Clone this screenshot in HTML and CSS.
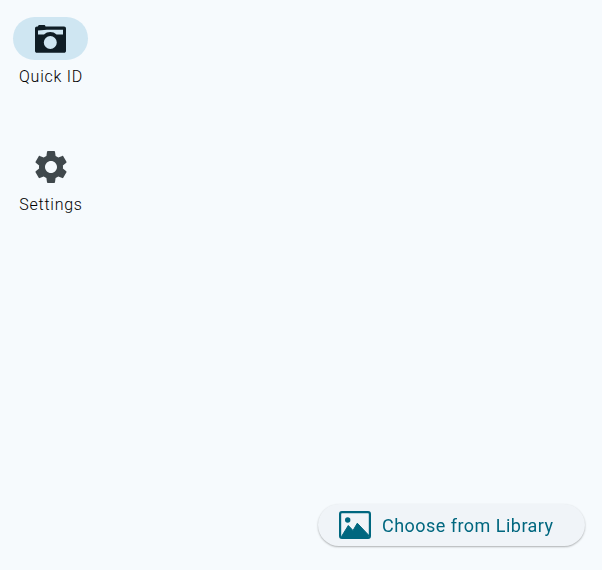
FILE: index.html
```html
<!DOCTYPE html>
<html lang="en">
  <head>
    <meta charset="UTF-8" />
    <meta name="viewport" content="width=device-width, initial-scale=1.0" />
    <title>Quick ID</title>
    <link rel="stylesheet" href="styles.css">
  </head>
  <body>
    <nav class="rail">
      <div class="rail-item">
        <div class="rail-icon active">
          <svg width="31" height="28" viewBox="0 0 31 28">
            <path fill="#0f1d25" fill-rule="evenodd" d="M3 1.500C3 .6 3.600 0 4.500 0h4.500c.9 0 1.500.6 1.500 1.500H29c1.200 0 2 .8 2 2V26c0 1.100-.8 1.800-2 1.800H2C.8 27.800 0 27.100 0 26V3.500c0-1.200.8-2 2-2h1zM3 9.500V5.600l9-.8H28v4.700h-6.500c-3.400-3.300-9.100-3.300-12.500 0H3zM15.300 11a6.500 6.500 0 1 0 0 13a6.500 6.500 0 0 0 0-13z"/>
          </svg>
        </div>
        <span class="rail-label">Quick ID</span>
      </div>
      <div class="rail-item">
        <div class="rail-icon">
          <svg width="40" height="40" viewBox="0 0 24 24">
            <path fill="#40484c" d="M19.14 12.94c.04-.3.06-.61.06-.94 0-.32-.02-.64-.07-.94l2.03-1.58c.18-.14.23-.41.12-.61l-1.92-3.32c-.12-.22-.37-.29-.59-.22l-2.39.96c-.5-.38-1.03-.7-1.62-.94l-.36-2.54c-.04-.24-.24-.41-.48-.41h-3.84c-.24 0-.43.17-.47.41l-.36 2.54c-.59.24-1.13.57-1.62.94l-2.39-.96c-.22-.08-.47 0-.59.22L2.74 8.87c-.12.21-.08.47.12.61l2.03 1.58c-.05.3-.09.63-.09.94s.02.64.07.94l-2.03 1.58c-.18.14-.23.41-.12.61l1.92 3.32c.12.22.37.29.59.22l2.39-.96c.5.38 1.03.7 1.62.94l.36 2.54c.05.24.24.41.48.41h3.84c.24 0 .44-.17.47-.41l.36-2.54c.59-.24 1.13-.56 1.62-.94l2.39.96c.22.08.47 0 .59-.22l1.92-3.32c.12-.22.07-.47-.12-.61l-2.01-1.58zM12 15.6c-1.98 0-3.6-1.62-3.6-3.6s1.62-3.6 3.6-3.6 3.6 1.62 3.6 3.6-1.62 3.6-3.6 3.6z"/>
          </svg>
        </div>
        <span class="rail-label">Settings</span>
      </div>
    </nav>

    <button class="library-button">
      <svg width="32" height="28" viewBox="0 0 32 28">
        <rect x="1.100" y="1.100" width="29.800" height="25.800" rx="1.800" fill="none" stroke="#00677f" stroke-width="2.200"/>
        <circle cx="8.700" cy="9" r="2.700" fill="#00677f"/>
        <path fill="#00677f" stroke="#00677f" stroke-linejoin="round" d="M2.500 25.500L9.300 14.500 14 19.500 18.300 12.200 29.500 24v1.500z"/>
      </svg>
      <span>Choose from Library</span>
    </button>
  </body>
</html>
```

FILE: styles.css
```css
body {
  font-family: Roboto, sans-serif;
  background-color: #f6fafd;
  margin: 0;
  height: 570px;
  overflow: hidden;
}
.rail {
  width: 101px;
  padding-top: 17px;
  display: flex;
  flex-direction: column;
  align-items: center;
  gap: 58px;
}
.rail-item {
  display: flex;
  flex-direction: column;
  align-items: center;
  gap: 7px;
}
.rail-icon {
  width: 75px;
  height: 43px;
  border-radius: 22px;
  display: flex;
  align-items: center;
  justify-content: center;
}
.rail-icon.active {
  background-color: #cfe6f2;
}
.rail-label {
  margin-left: 1px;
  font-size: 16px;
  font-weight: 300;
  line-height: 20px;
  letter-spacing: 0.75px;
  color: #000;
}
.library-button {
  position: fixed;
  right: 17px;
  bottom: 24px;
  width: 267px;
  height: 42px;
  padding: 0 0 0 21px;
  border: none;
  border-radius: 21px;
  background-color: #f0f4f8;
  box-shadow: 0 1px 2px rgba(0, 0, 0, 0.3);
  display: flex;
  align-items: center;
  gap: 11px;
  font-family: Roboto, sans-serif;
  font-size: 18px;
  letter-spacing: 0.47px;
  color: #00677f;
}
```
